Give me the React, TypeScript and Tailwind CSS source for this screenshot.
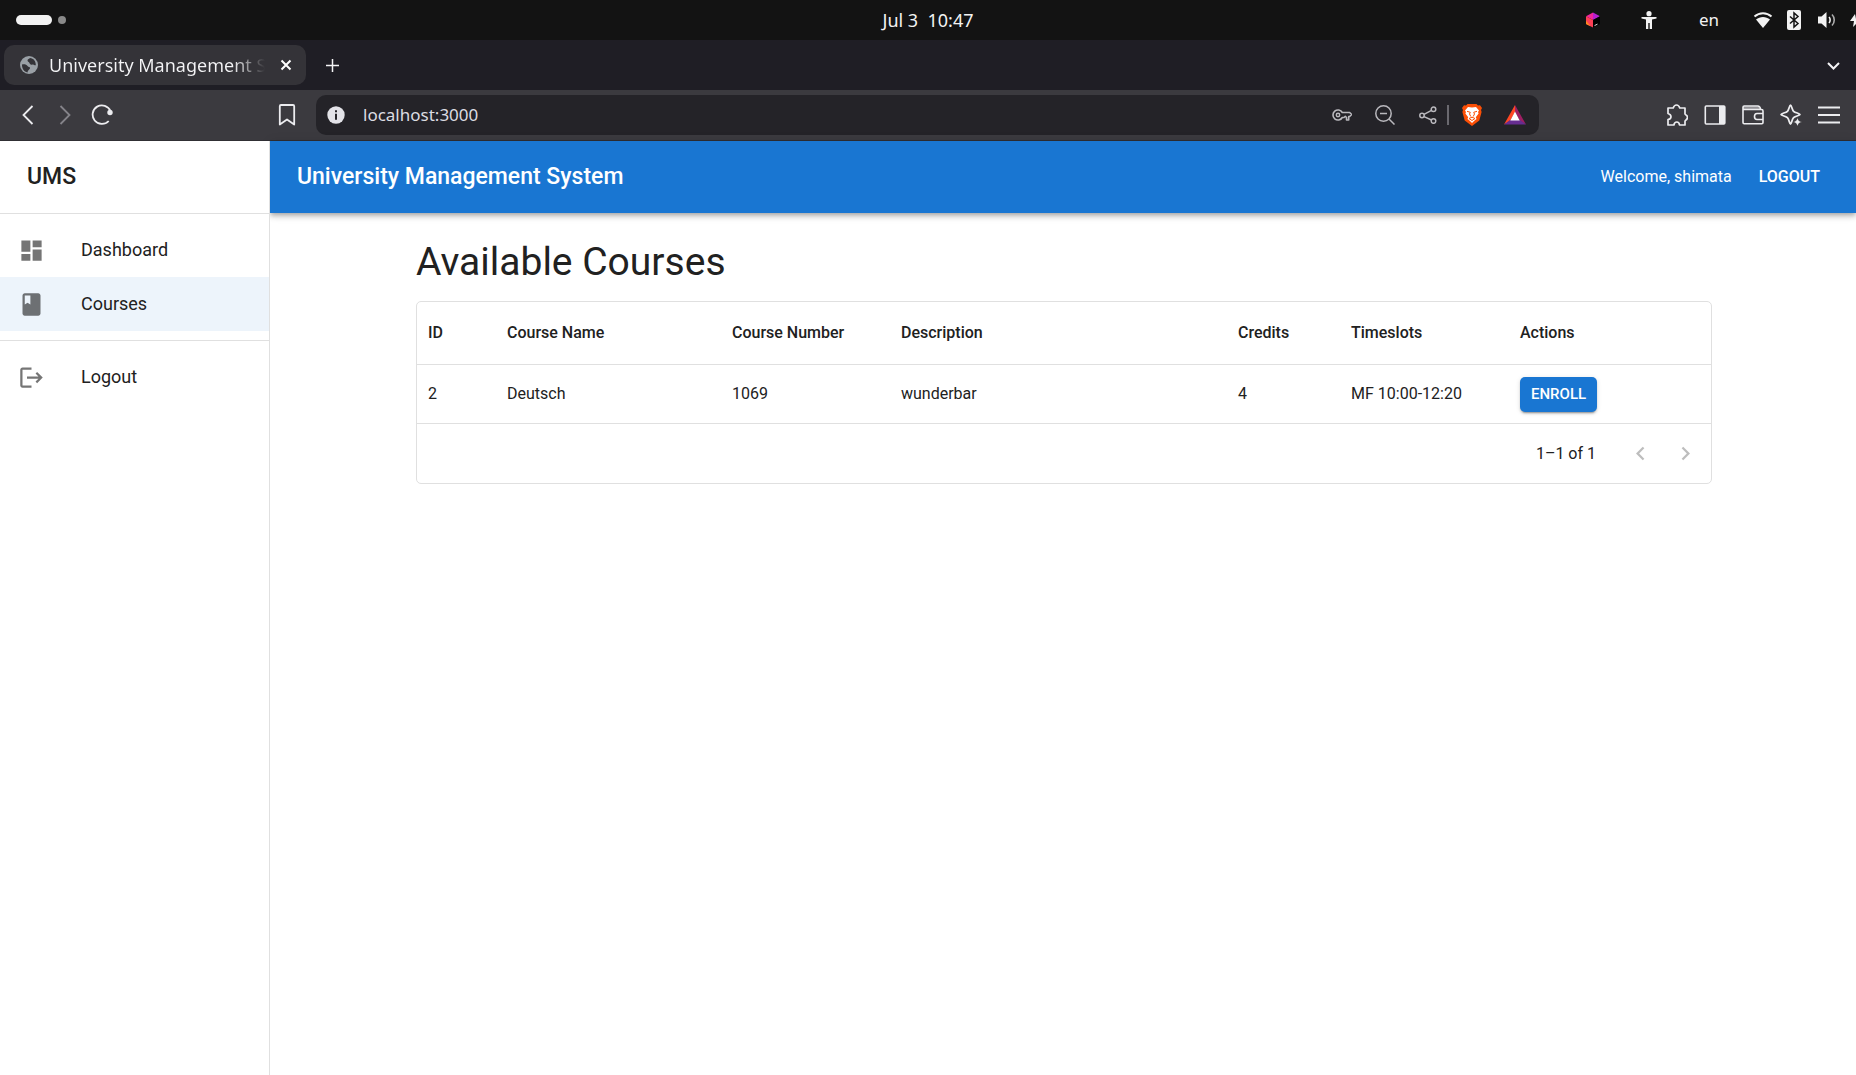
import type { ReactNode } from "react";

function Svg({ size, box = "0 0 24 24", children, className = "" }: { size: number; box?: string; children: ReactNode; className?: string }) {
  return (
    <svg width={size} height={size} viewBox={box} className={`shrink-0 ${className}`} fill="none" aria-hidden="true">
      {children}
    </svg>
  );
}

function SystemBar() {
  return (
    <div className="relative flex h-10 items-center justify-between overflow-hidden bg-[#131313] text-[#f2f2f2]">
      <button aria-label="Activities" className="ml-4 flex items-center gap-1.5">
        <span className="h-2.5 w-9 rounded-full bg-[#f2f2f2]" />
        <span className="size-2 rounded-full bg-[#8a8a8a]" />
      </button>
      <button className="absolute inset-x-0 mx-auto w-fit text-[18px] whitespace-pre">{"Jul 3  10:47"}</button>
      <div className="flex items-center">
        <Svg size={16} box="0 0 16 16">
          <path d="M8 .5 15 4.2 8 8z" fill="#b51fd0" />
          <path d="M8 .5 1 4.2 8 8z" fill="#f0259b" />
          <path d="M1 4.2 8 8v7.5L1 12z" fill="#fc3f55" />
          <path d="M1 8.500 5.500 14.200 1 12z" fill="#ff8a1c" />
          <path d="M8 8l7-3.800V12l-7 3.500z" fill="#000" />
          <path d="m9.500 13.600 3-1.500" stroke="#ddd" strokeWidth="1" />
        </Svg>
        <Svg size={18} box="0 0 18 18" className="ml-[39px]">
          <circle cx="9" cy="2.700" r="2.600" fill="#f2f2f2" />
          <path d="M1.500 6h15v1.500l-4.500 1V18H9.700v-6H8.300v6H6V8.500l-4.500-1z" fill="#f2f2f2" />
        </Svg>
        <button className="ml-[41px] text-[17px]">en</button>
        <Svg size={20} box="0 0 20 20" className="ml-[34px]">
          <path d="M1.500 6.500C6.500 2 13.500 2 18.500 6.500" stroke="#f2f2f2" strokeWidth="2" />
          <path d="M3 9.500C7 6 13 6 17 9.500L10 18z" fill="#f2f2f2" />
        </Svg>
        <Svg size={20} box="0 0 20 20" className="ml-[11px]">
          <rect x="3" width="14" height="20" rx="2" fill="#f2f2f2" />
          <path d="m6 6.500 8 7-4 3.500V3l4 3.500-8 7" stroke="#131313" strokeWidth="1.500" />
        </Svg>
        <Svg size={20} box="0 0 20 20" className="ml-[13px]">
          <path d="M1 6.500h3.500L9.500 2v16l-5-4.500H1z" fill="#f2f2f2" />
          <path d="M12 7c1.500 1.500 1.500 4.500 0 6" stroke="#f2f2f2" strokeWidth="1.600" />
          <path d="M15 4.500c3 3 3 8 0 11" stroke="#aaa" strokeWidth="1.600" />
        </Svg>
        <Svg size={16} box="0 0 16 16" className="-mr-2 ml-[11px]">
          <path d="M7 2 2 9h4l-1 6 8-8H8z" fill="#f2f2f2" />
        </Svg>
      </div>
    </div>
  );
}

function TabStrip() {
  return (
    <div className="flex h-[50px] items-center bg-[#1f1e25] pr-4 pl-1 text-[#f4f4f6]">
      <div className="flex h-10 w-[302px] items-center rounded-[10px] bg-[#343338] pl-4">
        <Svg size={18} box="0 0 18 18">
          <circle cx="9" cy="9" r="9" fill="#9aa0a6" />
          <path d="M2 8.500c2.500-.5 4.500 0 5.500 1.500s2.500.5 2.500 2-2 1.500-2.500 4.500C4 15.800 1.800 12.500 2 8.500zM10 2c-.5 1-2.500 1-2.500 2.500S9 5.500 9.500 7s1.500 2 3 1.500 1.500 1 3.300.8C16 5 13.500 2.300 10 2z" fill="#343338" />
        </Svg>
        <span className="ml-[11px] w-[216px] overflow-hidden bg-linear-to-r from-[#f4f4f6] from-85% to-transparent bg-clip-text text-[18px] leading-6 whitespace-nowrap text-transparent">University Management System</span>
        <button aria-label="Close tab" className="ml-[15px]">
          <Svg size={12} box="0 0 12 12">
            <path d="m1.500 1.500 9 9m0-9-9 9" stroke="#fff" strokeWidth="2" />
          </Svg>
        </button>
      </div>
      <button aria-label="New tab" className="ml-5">
        <Svg size={13} box="0 0 13 13">
          <path d="M6.500 0v13M0 6.500h13" stroke="currentColor" strokeWidth="1.500" />
        </Svg>
      </button>
      <button aria-label="Search tabs" className="ml-auto">
        <Svg size={13} box="0 0 13 13">
          <path d="m1 4 5.500 5.500L12 4" stroke="currentColor" strokeWidth="2" />
        </Svg>
      </button>
    </div>
  );
}

function Toolbar() {
  return (
    <div className="flex h-[51px] items-center border-b border-[#302f34] bg-[#3b3a3f] pr-4 pl-[18px] text-[#ececef]">
      <button aria-label="Back">
        <Svg size={20} box="0 0 20 20">
          <path d="m14.500 1-9 9 9 9" stroke="currentColor" strokeWidth="1.800" />
        </Svg>
      </button>
      <button aria-label="Forward" className="ml-[17px] text-[#85848a]">
        <Svg size={20} box="0 0 20 20">
          <path d="m5.500 1 9 9-9 9" stroke="currentColor" strokeWidth="1.800" />
        </Svg>
      </button>
      <button aria-label="Reload" className="ml-4">
        <Svg size={22} box="0 0 22 22">
          <path d="M17.700 17A9.300 9.300 0 1 1 19.500 7" stroke="currentColor" strokeWidth="1.800" />
          <circle cx="19" cy="8.500" r="2.700" fill="currentColor" />
        </Svg>
      </button>
      <button aria-label="Bookmark" className="ml-[163px]">
        <Svg size={22} box="0 0 22 22">
          <path d="M5 1h12q1.200 0 1.200 1.200V20.500L11 15.500 3.800 20.500V2.200Q3.800 1 5 1z" stroke="currentColor" strokeWidth="1.800" strokeLinejoin="round" />
        </Svg>
      </button>
      <div className="ml-[18px] flex h-10 w-[1223px] min-w-0 items-center rounded-[10px] bg-[#242328] pr-[13px] pl-[11px] text-[#b9b8bd]">
        <Svg size={18} box="0 0 18 18">
          <circle cx="9" cy="9" r="8.700" fill="#e3e3e8" />
          <path d="M8 4.200h2v2H8zM8 7.800h2v6H8z" fill="#242328" />
        </Svg>
        <input aria-label="Address" defaultValue="localhost:3000" className="ml-[18px] min-w-0 flex-1 bg-transparent text-[17px] text-[#dcdce2] outline-none" />
        <button aria-label="Passwords">
          <Svg size={20} box="0 0 20 20">
            <path d="M10.300 7.500A5 5 0 1 0 10.300 12.500H12l1.300-1.200 1.200 1.200v2.500h2.200v-3.500h1l2-2-2-2z" stroke="currentColor" strokeWidth="1.600" strokeLinejoin="round" />
            <circle cx="6" cy="10" r="1.700" stroke="currentColor" strokeWidth="1.500" />
          </Svg>
        </button>
        <button aria-label="Zoom out" className="ml-[23px]">
          <Svg size={20} box="0 0 20 20">
            <circle cx="8.500" cy="8.500" r="7.700" stroke="currentColor" strokeWidth="1.500" />
            <path d="m14 14 5.500 5.500M5 8.500h7" stroke="currentColor" strokeWidth="1.500" />
          </Svg>
        </button>
        <button aria-label="Share" className="ml-6">
          <Svg size={18} box="0 0 18 18">
            <g stroke="currentColor" strokeWidth="1.500">
              <circle cx="3" cy="9.500" r="2.200" />
              <circle cx="14.500" cy="3.300" r="2.300" />
              <circle cx="14.500" cy="15" r="2.300" />
              <path d="m5 8.400 7.500-4M5 10.600l7.500 3.400" />
            </g>
          </Svg>
        </button>
        <span className="ml-2.5 h-5 w-0.5 bg-[#6a696f]" />
        <button aria-label="Shields" className="ml-[13px]">
          <svg width="20" height="22" viewBox="0 0 20 22" aria-hidden="true">
            <path d="M5.500 0h9l1.500 1.500 2-.3 2 2.800-1 2 .6 2-2.300 8.500L10 22l-7.300-5.500L.4 8 1 6 0 4l2-2.800 2 .3z" fill="#fb4f06" />
            <path d="M10 3.500 6 3 3 6.500l1 1.500-.6 1.500 2.800 3.800-.7 1.700L8 17l2 2 2-2 2.500-2-.7-1.700 2.800-3.800L16 8l1-1.500L14 3z" fill="#fff" />
            <path d="m5 7.300 3.300 1-.8 1.700 1.300 2.500M15 7.300l-3.300 1 .8 1.700-1.300 2.500M7 14.500l3-1.300 3 1.300-3 2z" stroke="#fb4f06" strokeWidth="1" fill="none" />
          </svg>
        </button>
        <button aria-label="Rewards" className="ml-[22px]">
          <svg width="22" height="20" viewBox="0 0 22 20" aria-hidden="true">
            <path d="M11 0v7L6 16 0 19.500z" fill="#ff4724" />
            <path d="M11 0v7l5 9 6 3.500z" fill="#9e1f63" />
            <path d="M0 19.500 6 15h10l6 4.500z" fill="#662d91" />
            <path d="m11 6.500-4.700 9h9.400z" fill="#fff" />
          </svg>
        </button>
      </div>
      <div className="ml-auto flex shrink-0 items-center gap-4">
        <button aria-label="Extensions">
          <Svg size={22} box="0 0 22 22">
            <path d="M2 4h5.200q1-3 3.300-3t3.300 3H19v5q-.3 1.500 1 2 1.500.8 1.500 2.300T20 16q-1.200.6-1 2v3h-5.500q-.3-3-2.700-3t-2.900 3H2v-5.500q3-.5 3-2.800T2 9.500z" stroke="currentColor" strokeWidth="1.700" strokeLinejoin="round" />
          </Svg>
        </button>
        <button aria-label="Side panel">
          <Svg size={22} box="0 0 22 22">
            <rect x="1.300" y="2" width="19.500" height="18" rx="1" stroke="currentColor" strokeWidth="1.600" />
            <path d="M15 2h6v18h-6z" fill="currentColor" />
          </Svg>
        </button>
        <button aria-label="Wallet">
          <Svg size={22} box="0 0 22 22">
            <path d="M1 2.500h14.500q2.500 0 2.500 3H1z" fill="#929196" />
            <path d="M1 5.500h18.500q1.500 0 1.500 1.500v11.500q0 1.200-1.200 1.200H2.200Q1 19.700 1 18.500V3.200Q1 2 2.200 2H16q2.500.5 2.500 3.500M21 9.500h-6q-2.500 0-2.500 3t2.500 3h6" stroke="currentColor" strokeWidth="1.600" />
          </Svg>
        </button>
        <button aria-label="Leo AI">
          <Svg size={22} box="0 0 22 22">
            <path d="M10.500 1.200c1 0 1.600 4.600 3.100 6.100s6.400 2.100 6.400 3.200-4.500 1.300-6.400 3.200-2 6.300-3.100 6.300-1.200-4.400-3.100-6.300-6.400-2.100-6.400-3.200 4.900-1.700 6.400-3.200 2.100-6.100 3.100-6.100z" stroke="currentColor" strokeWidth="1.800" />
            <path d="M17.500 13.500q.6 4 4.500 4.500-4 .6-4.500 4.500-.6-4-4.500-4.500 4-.6 4.500-4.500z" fill="currentColor" stroke="#3b3a3f" strokeWidth=".5" />
          </Svg>
        </button>
        <button aria-label="Menu">
          <Svg size={22} box="0 0 22 22">
            <path d="M0 3.500h22M0 11h22M0 18.500h22" stroke="currentColor" strokeWidth="1.800" />
          </Svg>
        </button>
      </div>
    </div>
  );
}

const dashboardIcon = "M3 13h8V3H3v10zm0 8h8v-6H3v6zm10 0h8V11h-8v10zm0-18v6h8V3h-8z";
const bookIcon = "M18 2H6c-1.100 0-2 .9-2 2v16c0 1.100.9 2 2 2h12c1.100 0 2-.9 2-2V4c0-1.100-.9-2-2-2zM6 4h5v8l-2.500-1.500L6 12V4z";
const logoutIcon = "m17 7-1.410 1.410L18.170 11H8v2h10.170l-2.580 2.580L17 17l5-5zM4 5h8V3H4c-1.100 0-2 .9-2 2v14c0 1.100.9 2 2 2h8v-2H4V5z";

function NavItem({ icon, label, selected = false }: { icon: string; label: string; selected?: boolean }) {
  return (
    <li>
      <a href="#" aria-current={selected ? "page" : undefined} className={`flex h-[54px] items-center gap-9 px-[18px] text-[18px] ${selected ? "bg-[#edf4fb]" : ""}`}>
        <Svg size={27}>
          <path d={icon} fill="#000" fillOpacity=".54" />
        </Svg>
        <span className="pb-0.5">{label}</span>
      </a>
    </li>
  );
}

function Sidebar() {
  return (
    <aside className="relative z-10 flex w-[270px] shrink-0 flex-col border-r border-[#e0e0e0] bg-white">
      <div className="flex h-[73px] items-center border-b border-[#e0e0e0] px-[27px] text-[23px] font-medium">UMS</div>
      <nav>
        <ul className="border-b border-[#e0e0e0] py-[9px]">
          <NavItem icon={dashboardIcon} label="Dashboard" />
          <NavItem icon={bookIcon} label="Courses" selected />
        </ul>
        <ul className="py-[9px]">
          <NavItem icon={logoutIcon} label="Logout" />
        </ul>
      </nav>
    </aside>
  );
}

const columns = [
  { title: "ID", width: "w-[79px]" },
  { title: "Course Name", width: "w-[225px]" },
  { title: "Course Number", width: "w-[169px]" },
  { title: "Description", width: "w-[337px]" },
  { title: "Credits", width: "w-[113px]" },
  { title: "Timeslots", width: "w-[169px]" },
  { title: "Actions", width: "" },
];

const courses = [{ id: 2, name: "Deutsch", number: "1069", description: "wunderbar", credits: 4, timeslots: "MF 10:00-12:20" }];

function PageButton({ label, path }: { label: string; path: string }) {
  return (
    <button aria-label={label} disabled className="p-[9px] text-black/26">
      <Svg size={27}>
        <path d={path} fill="currentColor" />
      </Svg>
    </button>
  );
}

function CourseTable() {
  return (
    <div className="mt-4 rounded-[5px] border border-[#e0e0e0] text-[16px]">
      <table className="w-full table-fixed border-separate border-spacing-0 text-left">
        <thead>
          <tr className="h-[63px]">
            {columns.map((c) => (
              <th key={c.title} scope="col" className={`border-b border-[#e0e0e0] px-[11px] font-medium ${c.width}`}>{c.title}</th>
            ))}
          </tr>
        </thead>
        <tbody>
          {courses.map((c) => (
            <tr key={c.id} className="h-[59px] *:border-b *:border-[#e0e0e0] *:px-[11px]">
              <td>{c.id}</td>
              <td>{c.name}</td>
              <td>{c.number}</td>
              <td>{c.description}</td>
              <td>{c.credits}</td>
              <td>{c.timeslots}</td>
              <td>
                <button className="flex h-[35px] items-center rounded-[5px] bg-[#1976d2] px-[11px] text-[15px] font-medium text-white shadow-[0_3px_1px_-2px_rgba(0,0,0,0.2),0_2px_2px_0_rgba(0,0,0,0.14),0_1px_5px_0_rgba(0,0,0,0.12)]">ENROLL</button>
              </td>
            </tr>
          ))}
        </tbody>
      </table>
      <div className="flex h-[59px] items-center justify-end pr-[3px]">
        <span className="mr-[22px]">1–1 of 1</span>
        <PageButton label="Previous page" path="M15.410 7.410 14 6l-6 6 6 6 1.410-1.410L10.830 12z" />
        <PageButton label="Next page" path="M10 6 8.590 7.410 13.170 12l-4.580 4.590L10 18l6-6z" />
      </div>
    </div>
  );
}

export default function App() {
  return (
    <div className="flex min-h-screen flex-col bg-white font-['Roboto',sans-serif] text-[#212121]">
      <div className="font-['Noto_Sans',sans-serif]">
        <SystemBar />
        <TabStrip />
        <Toolbar />
      </div>
      <div className="flex flex-1">
        <Sidebar />
        <div className="min-w-0 flex-1">
          <header className="flex h-[72px] items-center bg-[#1976d2] px-[27px] text-white shadow-[0_2px_4px_-1px_rgba(0,0,0,0.2),0_4px_5px_0_rgba(0,0,0,0.14),0_1px_10px_0_rgba(0,0,0,0.12)]">
            <div className="text-[23px] font-medium">University Management System</div>
            <span className="ml-auto text-[16px]">Welcome, shimata</span>
            <button className="ml-[18px] px-[9px] text-[16px] font-medium">LOGOUT</button>
          </header>
          <main className="mx-auto max-w-[1350px] pt-[26px] pr-[26px] pl-7">
            <h1 className="text-[39px] leading-[46px]">Available Courses</h1>
            <CourseTable />
          </main>
        </div>
      </div>
    </div>
  );
}
